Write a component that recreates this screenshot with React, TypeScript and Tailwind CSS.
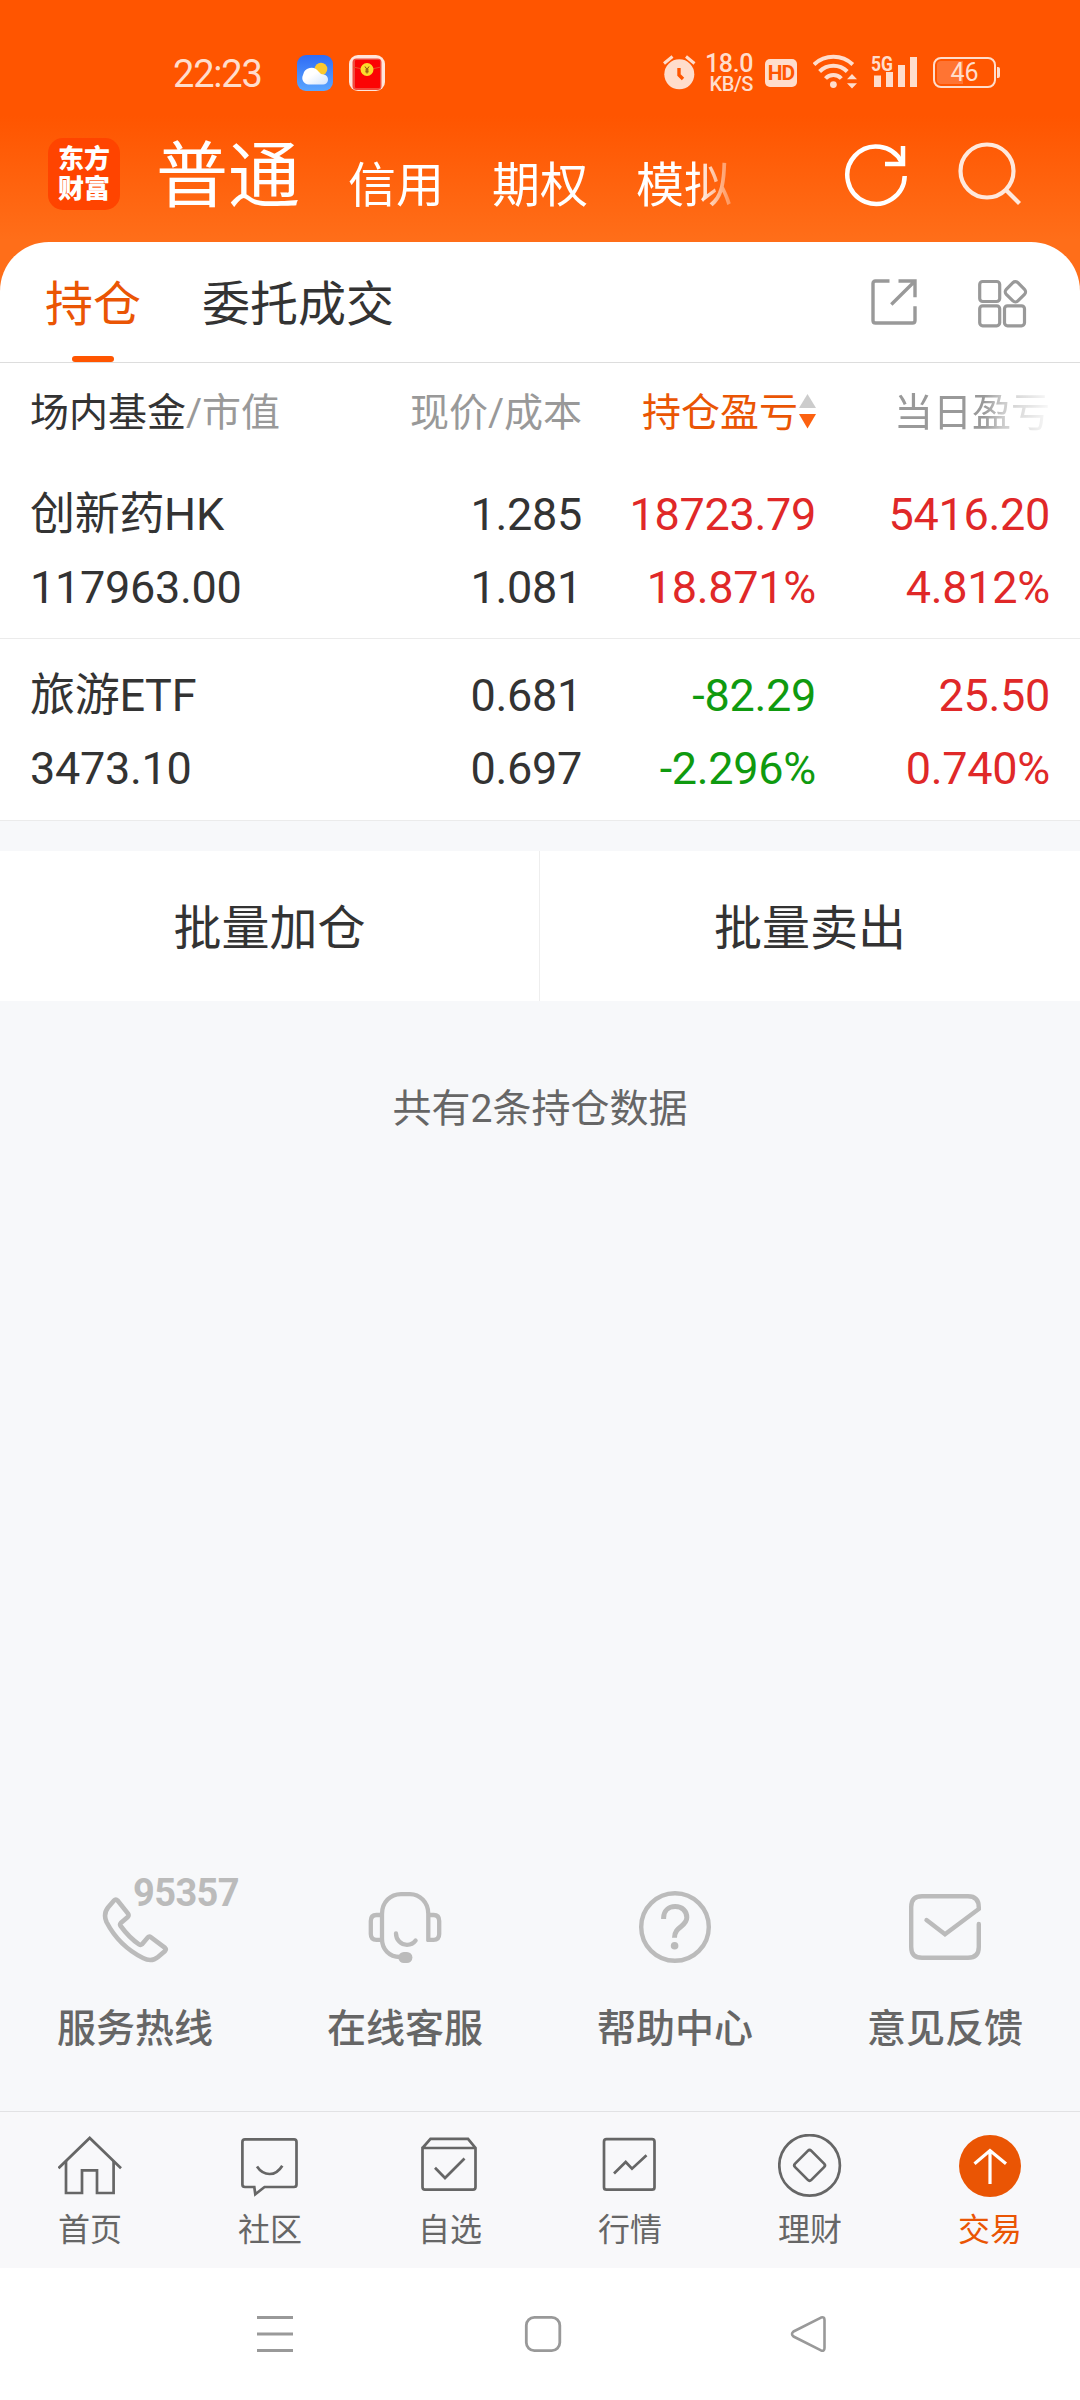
import type { ReactNode } from "react";

type Tone = "up" | "down" | "plain";

type Holding = {
  name: string;
  value: string;
  price: string;
  cost: string;
  profit: string;
  profitRate: string;
  profitTone: Tone;
  today: string;
  todayRate: string;
  todayTone: Tone;
};

const holdings: Holding[] = [
  {
    name: "创新药HK",
    value: "117963.00",
    price: "1.285",
    cost: "1.081",
    profit: "18723.79",
    profitRate: "18.871%",
    profitTone: "up",
    today: "5416.20",
    todayRate: "4.812%",
    todayTone: "up",
  },
  {
    name: "旅游ETF",
    value: "3473.10",
    price: "0.681",
    cost: "0.697",
    profit: "-82.29",
    profitRate: "-2.296%",
    profitTone: "down",
    today: "25.50",
    todayRate: "0.740%",
    todayTone: "up",
  },
];

const toneClass: Record<Tone, string> = {
  up: "text-[#e02828]",
  down: "text-[#0f9a0f]",
  plain: "text-[#333333]",
};

export default function App() {
  return (
    <div className="flex h-[2400px] w-[1080px] flex-col overflow-hidden bg-[#f7f8fa] font-[Roboto,'Noto_Sans_CJK_SC',sans-serif] text-[#333333]">
      <div className="bg-[linear-gradient(180deg,#ff5500_0px,#ff5500_116px,#ff6e19_240px,#ff6e19_290px)]">
        <StatusBar />
        <TopNav />
        <Tabs />
      </div>
      <HoldingsTable />
      <div className="mt-[30px] grid h-[150px] grid-cols-[540px_540px] bg-white text-[48px] leading-[48px]">
        <button className="flex items-center justify-center border-r border-[#eeeeee] pt-[5px]">
          批量加仓
        </button>
        <button className="flex items-center justify-center pt-[5px]">
          批量卖出
        </button>
      </div>
      <p className="mt-[88px] text-center text-[39px] leading-[40px] text-[#666666]">
        共有2条持仓数据
      </p>
      <Services />
      <TabBar />
      <SystemNav />
    </div>
  );
}

function StatusBar() {
  return (
    <div className="flex h-[116px] items-start pl-[173px] text-[#ffddcc]">
      <span className="mt-[52px] w-[124px] text-[38px] leading-[44px] tracking-[-1.2px]">
        22:23
      </span>
      <svg className="mt-[55px]" width="36" height="36" viewBox="0 0 36 36">
        <defs>
          <linearGradient id="sky" x1="0" y1="0" x2="0" y2="1">
            <stop offset="0" stopColor="#2f6cf6" />
            <stop offset="1" stopColor="#5aa6ff" />
          </linearGradient>
          <linearGradient id="cloud" x1="0" y1="0" x2="1" y2="1">
            <stop offset="0.4" stopColor="#ffffff" />
            <stop offset="1" stopColor="#d3e4fc" />
          </linearGradient>
        </defs>
        <rect width="36" height="36" rx="9" fill="url(#sky)" />
        <circle cx="24" cy="14" r="6.3" fill="#fcc92e" />
        <path
          d="M11.500 29.500a6.500 6.500 0 0 1-5.500-9.500a8.500 8.500 0 0 1 15.500-3.500q1.500 2.500 5 3a5 5 0 0 1-1 10z"
          fill="url(#cloud)"
        />
      </svg>
      <svg className="mt-[55px] ml-[16px]" width="36" height="36" viewBox="0 0 36 36">
        <rect width="36" height="36" rx="9" fill="#ffe6dc" />
        <rect x="3.500" y="3.500" width="29" height="31.500" rx="4" fill="#f24a3c" />
        <rect x="6" y="5" width="25" height="28" rx="1" fill="#fb0404" />
        <path d="M4 12q14 4 28 0" stroke="#e8502a" fill="none" />
        <circle cx="18" cy="14.500" r="6.500" fill="#fbdc2c" />
        <path d="M16 11.500l2 3l2-3M18 14.500v4M16.300 15h3.400M16.300 16.800h3.400" stroke="#8a4a10" fill="none" />
      </svg>
      <svg className="mt-[54px] ml-[278px]" width="33" height="36" viewBox="0 0 33 36">
        <circle cx="16.300" cy="20.300" r="15" fill="#ffddcc" />
        <path d="M1 9.500L9.500 2.500M23 2.500L31.500 9.500" stroke="#ffddcc" strokeWidth="3" />
        <path d="M16 14V21L20 25" stroke="#ff5500" strokeWidth="3.400" fill="none" />
      </svg>
      <div className="mt-[53px] ml-[10px] flex w-[47px] flex-col items-end font-medium">
        <span className="text-[25px] leading-[22px] tracking-[-0.4px]">18.0</span>
        <span className="text-[20px] leading-[18px] tracking-[-0.4px]">KB/S</span>
      </div>
      <span className="mt-[59px] ml-[12px] flex h-[28px] w-[32px] items-center justify-center rounded-[5px] bg-[#ffddcc] text-[21px] leading-none font-bold tracking-[-1px] text-[#ff5500]">
        HD
      </span>
      <svg className="mt-[54px] ml-[16px]" width="45" height="36" viewBox="0 0 45 36">
        <g stroke="#ffddcc" strokeWidth="4" fill="none">
          <path d="M1 10.500A28.400 28.400 0 0 1 39.800 10.500" />
          <path d="M6.600 17.500A19.500 19.500 0 0 1 34.200 17.500" />
          <path d="M12.500 24.500A10.600 10.600 0 0 1 28.300 24.500" />
        </g>
        <circle cx="20.400" cy="30.600" r="3.400" fill="#ffddcc" />
        <path d="M39 20l5 5.300h-10zM39 34.500l5-5.300h-10z" fill="#ffddcc" />
      </svg>
      <svg className="mt-[50px] ml-[12px]" width="48" height="39" viewBox="-1 -4 48 39">
        <text
          x="0"
          y="16.500"
          fill="#ffddcc"
          className="text-[20px] font-bold"
          textLength="22"
          lengthAdjust="spacingAndGlyphs"
        >
          5G
        </text>
        <path d="M3 21.500h7V33H3zM15 18h7V33h-7zM27 11h7V33h-7zM39 3h7V33h-7z" fill="#ffddcc" />
      </svg>
      <div className="mt-[57px] ml-[15px] flex items-center">
        <div className="flex h-[31px] w-[63px] items-center justify-center rounded-[8px] border-2 border-[#ffddcc] bg-[linear-gradient(90deg,#ff7433_28px,transparent_28px)] bg-clip-content p-[2px] text-[25px] leading-none">
          46
        </div>
        <div className="ml-[1px] h-[11px] w-[3px] rounded-r-[2px] bg-[#ffddcc]" />
      </div>
    </div>
  );
}

function TopNav() {
  return (
    <div className="flex h-[126px] items-start pl-[48px] text-white">
      <div className="mt-[22px] flex h-[72px] w-[72px] flex-col items-center justify-center rounded-[15px] bg-[#ff4400] text-[26px] leading-[30px] font-black">
        <span>东方</span>
        <span>财富</span>
      </div>
      <div className="ml-[36px] flex h-[110px] w-[576px] items-start gap-[48px] overflow-hidden whitespace-nowrap [mask-image:linear-gradient(90deg,#000_540px,transparent_590px)]">
        <span className="pt-[2px] text-[72px] leading-[118px]">普通</span>
        <span className="pt-[44px] text-[48px] leading-[52px]">信用</span>
        <span className="pt-[44px] text-[48px] leading-[52px]">期权</span>
        <span className="pt-[44px] text-[48px] leading-[52px]">模拟</span>
      </div>
      <svg className="mt-[27px] ml-[112px]" width="64" height="64" viewBox="0 0 64 64" fill="none" stroke="#ffffff" strokeWidth="4.500">
        <path d="M60.700 33A28.700 28.700 0 1 1 57.500 19" />
        <path d="M59 3V21H41" />
      </svg>
      <svg className="mt-[26px] ml-[50px]" width="64" height="64" viewBox="0 0 64 64" fill="none" stroke="#ffe8dc" strokeWidth="4.200">
        <circle cx="29" cy="29" r="26.500" />
        <path d="M47.500 47.500L61.500 61.500" />
      </svg>
    </div>
  );
}

function Tabs() {
  return (
    <div className="flex h-[121px] items-start rounded-t-[49px] border-b border-[#dddddd] bg-white pl-[45px] text-[48px] leading-[48px]">
      <div className="flex h-[120px] w-[96px] flex-col items-center justify-between pt-[39px] text-[#ea5504]">
        <span>持仓</span>
        <span className="h-[6px] w-[42px] rounded-full bg-[#ff5500]" />
      </div>
      <span className="mt-[39px] ml-[61px] w-[192px]">委托成交</span>
      <svg className="mt-[37px] ml-[477px]" width="46" height="46" viewBox="0 0 46 46" fill="none" stroke="#999999" strokeWidth="3.400">
        <path d="M18.500 2H4.500Q2 2 2 4.500V41.500Q2 44 4.500 44H41.500Q44 44 44 41.500V27.300" />
        <path d="M27.500 2H44V18.300M43 3L20.300 25.500" />
      </svg>
      <svg className="mt-[37px] ml-[61px]" width="50" height="49" viewBox="0 0 50 49" fill="none" stroke="#999999" strokeWidth="3.200">
        <rect x="1.700" y="2.500" width="20" height="20" rx="3" />
        <rect x="1.700" y="26.800" width="20" height="20" rx="3" />
        <rect x="26.500" y="26.800" width="20" height="20" rx="3" />
        <rect x="29.200" y="4.600" width="16.400" height="16.400" rx="3.500" transform="rotate(45 37.400 12.800)" />
      </svg>
    </div>
  );
}

function HoldingsTable() {
  return (
    <div className="bg-white">
      <div className="grid h-[95px] grid-cols-[322px_230px_234px_234px] items-center px-[30px] pt-[5px] text-right text-[39px] leading-[40px] text-[#999999]">
        <span className="text-left">
          <span className="text-[#333333]">场内基金</span>/市值
        </span>
        <span>现价/成本</span>
        <span className="flex items-center justify-end gap-[1px] text-[#ea5504]">
          持仓盈亏
          <svg className="mb-[4px]" width="17" height="36" viewBox="0 0 17 36">
            <path d="M8.500 1L17 15H0z" fill="#cccccc" />
            <path d="M8.500 35.500L17 21H0z" fill="#fc6110" />
          </svg>
        </span>
        <span className="[mask-image:linear-gradient(90deg,#000_168px,rgba(0,0,0,0.5)_187px,transparent_240px)]">
          当日盈亏
        </span>
      </div>
      {holdings.map((holding) => (
        <HoldingRow key={holding.name} holding={holding} />
      ))}
    </div>
  );
}

function HoldingRow({ holding }: { holding: Holding }) {
  return (
    <div className="grid h-[181px] grid-cols-[322px_230px_234px_234px] border-b border-[#ebebeb] px-[30px] pt-[20px] text-right last:h-[182px]">
      <div className="text-left">
        <Cell top={holding.name} bottom={holding.value} tone="plain" />
      </div>
      <Cell top={holding.price} bottom={holding.cost} tone="plain" />
      <Cell top={holding.profit} bottom={holding.profitRate} tone={holding.profitTone} />
      <Cell top={holding.today} bottom={holding.todayRate} tone={holding.todayTone} />
    </div>
  );
}

function Cell({ top, bottom, tone }: { top: string; bottom: string; tone: Tone }) {
  return (
    <div
      className={`flex flex-col text-[45px] leading-[73px] tracking-[-0.3px] ${toneClass[tone]}`}
    >
      <span className="h-[73px]">{top}</span>
      <span className="h-[73px]">{bottom}</span>
    </div>
  );
}

function Services() {
  return (
    <div className="mt-auto grid h-[241px] grid-cols-4 text-[#666666]">
      <Service label="服务热线">
        <div className="relative">
          <svg width="74" height="74" viewBox="-2 1 74 74" fill="none" stroke="#bbbbbb" strokeWidth="4.600">
            <path d="M14 11.500q1.800-2 3.600 0L28 24.700q1.200 1.700-.3 3.400L20.800 34q-1.300 1.400-.1 3Q29 48.500 39 55.300q1.700 1 3 0L47.500 48.700q1.700-1.700 3.600-.4L65 58.800q1.500 1.500 0 3.200L58 68q-6.500 5.500-15 1Q19 57 6.500 33Q3 25 8 18.500z" />
          </svg>
          <span className="absolute -top-[16px] left-[35px] text-[38px] leading-[38px] font-bold tracking-[-0.6px] text-[#bbbbbb]">
            95357
          </span>
        </div>
      </Service>
      <Service label="在线客服">
        <svg width="74" height="74" viewBox="0 0 74 74" fill="none" stroke="#bbbbbb" strokeWidth="4.300">
          <path d="M60.300 51.500V24C60.300 12 51.500 4.200 42 4.200H33C22.500 4.200 14 12 14 24V49C14 59 21 67 32 67" />
          <path d="M13.500 25H8.500Q2.800 25 2.800 31V44Q2.800 49.800 8.500 49.800H13.500M60 25H65.500Q71.200 25 71.200 31V44Q71.200 49.800 65.500 49.800H59" />
          <path d="M28 43.500C28 50 33 54.800 39 54.800Q44.500 54.800 47.600 50.500" strokeLinecap="round" />
          <rect x="30.400" y="62" width="14" height="11" rx="5.500" fill="#bbbbbb" stroke="none" />
        </svg>
      </Service>
      <Service label="帮助中心">
        <svg width="74" height="74" viewBox="-1 -1 74 74" fill="none" stroke="#bbbbbb" strokeWidth="4.400">
          <circle cx="36" cy="36" r="33.800" />
          <path d="M24.600 28V27C24.600 20 29.300 15.600 36.200 15.600S47.800 20 47.800 26.500C47.800 36 35.500 35 35.500 46.700" strokeWidth="5" />
          <circle cx="35.600" cy="54.700" r="3.800" fill="#bbbbbb" stroke="none" />
        </svg>
      </Service>
      <Service label="意见反馈">
        <svg width="74" height="74" viewBox="-1 -4 74 74" fill="none" stroke="#bbbbbb" strokeWidth="4.400" strokeLinecap="round">
          <path d="M69.800 30V53Q69.800 63.800 59 63.800H13Q2.200 63.800 2.200 53V13Q2.200 2.200 13 2.200H59Q69.800 2.200 69.800 13.500V15L36 40.300L17.500 26" />
        </svg>
      </Service>
    </div>
  );
}

function Service({ label, children }: { label: string; children: ReactNode }) {
  return (
    <div className="flex flex-col items-center pt-[20px]">
      {children}
      <span className="mt-[45px] text-[39px] leading-[40px] font-medium">{label}</span>
    </div>
  );
}

const tabs: { label: string; icon: ReactNode }[] = [
  {
    label: "首页",
    icon: (
      <>
        <path d="M0.500 34.200L31.700 4L63 34.200" />
        <path d="M8 27V59H24V36.300H39V59H55.600V27" />
      </>
    ),
  },
  {
    label: "社区",
    icon: (
      <>
        <path d="M7 5.300H56Q58.500 5.300 58.500 8V50.500Q58.500 53 56 53H26.500L17.300 60.300L16.300 53H7Q4.400 53 4.400 50.500V8Q4.400 5.300 7 5.300z" />
        <path d="M19 32.500Q24 40 31.600 40T44.300 31.700" />
      </>
    ),
  },
  {
    label: "自选",
    icon: (
      <>
        <path d="M4.500 14L12.500 4.800H50L57.500 14V53Q57.500 55.700 55 55.700H7Q4.500 55.700 4.500 53V14H57.500" />
        <path d="M17 33.700L27 44L46.500 24.500" />
      </>
    ),
  },
  {
    label: "行情",
    icon: (
      <>
        <rect x="6" y="5.200" width="50.500" height="50.500" rx="2.500" />
        <path d="M16 39.500L27.700 28L34 34.700L48.500 21.300" />
      </>
    ),
  },
  {
    label: "理财",
    icon: (
      <>
        <circle cx="31.600" cy="31.400" r="30.300" />
        <rect x="20.100" y="19.900" width="23" height="23" rx="2.500" transform="rotate(45 31.600 31.400)" />
      </>
    ),
  },
  {
    label: "交易",
    icon: (
      <>
        <circle cx="32" cy="32" r="31" fill="#ea5504" stroke="none" />
        <path d="M32 50V17M16.500 29.700L32 16.500L48 29.700" stroke="#ffffff" strokeWidth="3.200" />
      </>
    ),
  },
];

function TabBar() {
  return (
    <div className="grid h-[157px] grid-cols-6 border-t border-[#e2e2e4] bg-[#f8f8fa] text-[32px] leading-[34px] text-[#666666]">
      {tabs.map((tab) => (
        <div
          key={tab.label}
          className="flex flex-col items-center pt-[22px] last:text-[#ea5504]"
        >
          <svg width="64" height="64" viewBox="0 0 64 64" fill="none" stroke="#666666" strokeWidth="2.700">
            {tab.icon}
          </svg>
          <span className="mt-[15px]">{tab.label}</span>
        </div>
      ))}
    </div>
  );
}

function SystemNav() {
  return (
    <div className="flex h-[132px] items-start bg-white pt-[46px] pl-[255px]">
      <svg width="40" height="40" viewBox="0 0 40 40" stroke="#999999" strokeWidth="3">
        <path d="M2 3.500H38M2 20H38M2 36.500H38" />
      </svg>
      <svg className="ml-[228px]" width="40" height="40" viewBox="0 0 40 40" fill="none" stroke="#999999" strokeWidth="2.800">
        <rect x="3.300" y="3.400" width="33.500" height="33.200" rx="8" />
      </svg>
      <svg className="ml-[226px]" width="40" height="40" viewBox="0 0 40 40" fill="none" stroke="#999999" strokeWidth="2.600" strokeLinejoin="round">
        <path d="M32 3.600Q35.500 2.500 35.500 6V34Q35.500 37.500 32 36.400L4.500 22.500Q1.500 20 4.500 17.500z" />
      </svg>
    </div>
  );
}
